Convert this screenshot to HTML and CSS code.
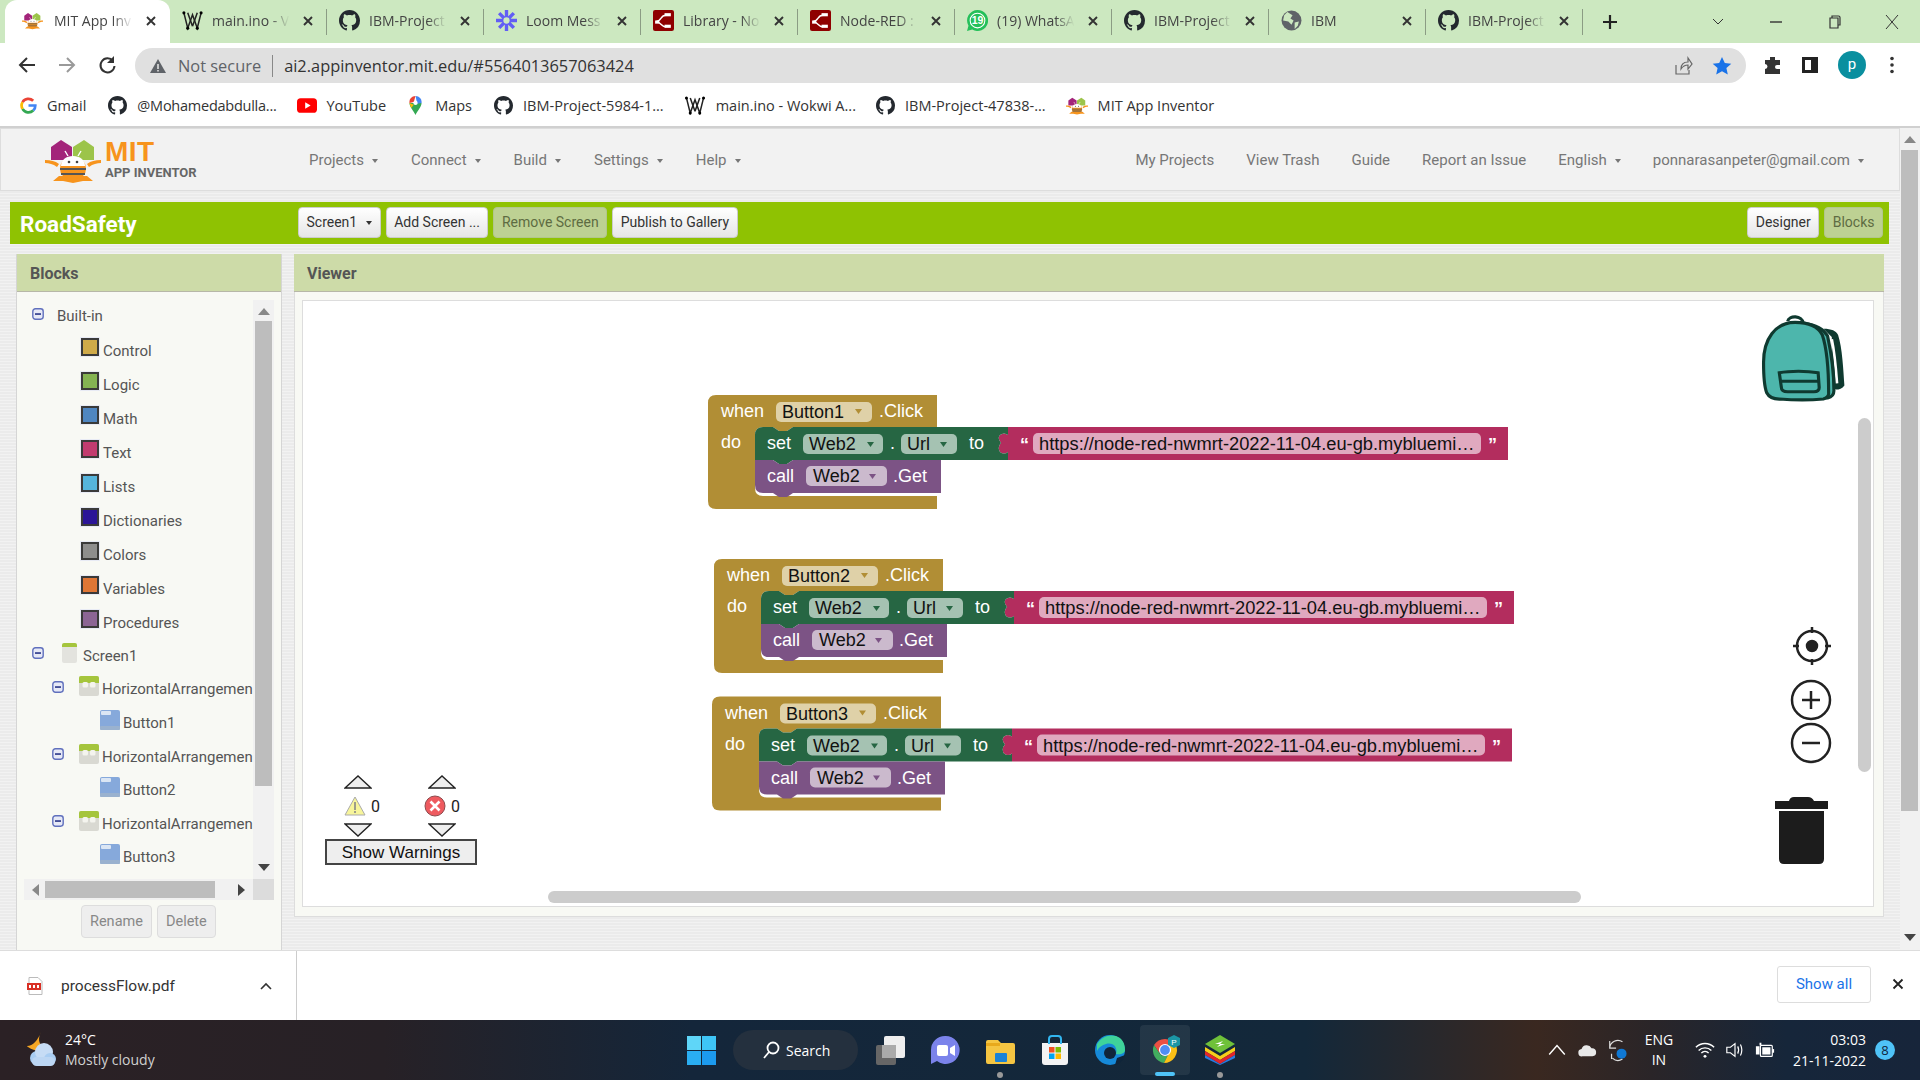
FILE: index.html
```html
<!DOCTYPE html>
<html lang="en">
<head>
    <meta charset="UTF-8">
    <title>MIT App Inventor</title>
    <link rel="stylesheet" href="styles.css">
</head>
<body>
    <!-- shared icons -->
    <svg class="defs" width="0" height="0">
        <symbol id="i-github" viewBox="0 0 16 16"><path fill="#24292f" d="M8 0C3.58 0 0 3.58 0 8c0 3.54 2.29 6.53 5.47 7.59.4.07.55-.17.55-.38 0-.19-.01-.82-.01-1.49-2.01.37-2.53-.49-2.69-.94-.09-.23-.48-.94-.82-1.13-.28-.15-.68-.52-.01-.53.63-.01 1.08.58 1.23.82.72 1.21 1.87.87 2.33.69.07-.52.28-.87.51-1.07-1.78-.2-3.64-.89-3.64-3.95 0-.87.31-1.59.82-2.15-.08-.2-.36-1.02.08-2.12 0 0 .67-.21 2.2.82.64-.18 1.32-.27 2-.27.68 0 1.36.09 2 .27 1.53-1.04 2.2-.82 2.2-.82.44 1.1.16 1.92.08 2.12.51.56.82 1.27.82 2.15 0 3.07-1.87 3.75-3.65 3.95.29.25.54.73.54 1.48 0 1.07-.01 1.93-.01 2.2 0 .21.15.46.55.38A8.013 8.013 0 0016 8c0-4.42-3.58-8-8-8z"/></symbol>
        <symbol id="i-wokwi" viewBox="0 0 22 20"><g fill="none" stroke="#222" stroke-width="1.6"><path d="M2 2l4 16 5-14 5 14 4-16"/><path d="M6 2l5 14M16 2l-5 14"/></g><circle cx="2" cy="2" r="1.6"/><circle cx="20" cy="2" r="1.6"/><circle cx="6" cy="18" r="1.6"/><circle cx="16" cy="18" r="1.6"/></symbol>
        <symbol id="i-nodered" viewBox="0 0 20 20"><rect width="20" height="20" rx="2" fill="#8f0000"/><g fill="none" stroke="#fff" stroke-width="1.4"><path d="M3 11c5 0 4-6 9-6M3 11c4 0 5 5 9 5"/></g><rect x="11" y="3" width="6" height="3" fill="#fff"/><rect x="2" y="10" width="4" height="3" fill="#fff"/><rect x="11" y="14" width="6" height="3" fill="#fff"/></symbol>
        <symbol id="i-bee" viewBox="0 0 56 46"><path fill="#a3247a" d="M6 10L16 3l11 7v13H6z"/><path fill="#9cc44a" d="M28 10l11-7 10 7v13H28z"/><path fill="#f7941d" d="M0 23c6 0 10 1 14 4l-2 3C8 27 4 26 0 26zM56 23c-6 0-10 1-14 4l2 3c4-3 8-4 12-4zM14 39l-6 5h10l10 2 10-2h10l-6-5z"/><rect x="15" y="21" width="26" height="21" rx="10" fill="#f7941d"/><path fill="#fff" d="M16 29c0-6 5-10 12-10s12 4 12 10z"/><path fill="#555" d="M15 31h26v2H15zM16 36h24v2H16z"/><circle cx="24" cy="25" r="1.3" fill="#444"/><circle cx="32" cy="25" r="1.3" fill="#444"/><path d="M23 19l-3-5M33 19l3-5" stroke="#fff" stroke-width="1.4"/></symbol>
        <symbol id="i-close" viewBox="0 0 12 12"><path d="M2 2l8 8M10 2l-8 8" stroke="#333" stroke-width="1.9"/></symbol>
        <symbol id="i-minus" viewBox="0 0 12 12"><rect x=".8" y=".8" width="10.4" height="10.4" rx="2.6" fill="#e6e9f6" stroke="#6070bd" stroke-width="1.4"/><rect x="3" y="5.2" width="6" height="1.7" fill="#34408e"/></symbol>
        <symbol id="i-arrange" viewBox="0 0 20 20"><rect width="20" height="20" rx="2" fill="#d9d9d2"/><path fill="#a5c53c" d="M0 2q0-2 2-2h16q2 0 2 2v5H0z"/><rect x="3.500" y="6" width="5.500" height="5.500" rx="1.500" fill="#f4f4ee"/><rect x="11" y="6" width="5.500" height="5.500" rx="1.500" fill="#f4f4ee"/></symbol>
        <symbol id="i-button" viewBox="0 0 20 20"><rect width="20" height="20" rx="2" fill="#86a9db"/><rect y="16" width="20" height="4" rx="1" fill="#9ab2cf"/><rect x="1" y="1" width="10" height="4" rx="1" fill="#dbe6f4"/></symbol>
        <symbol id="i-up" viewBox="0 0 28 14"><path d="M1 13L14 1l13 12z" fill="#eee" stroke="#222" stroke-width="1.4"/></symbol>
        <symbol id="i-down" viewBox="0 0 28 14"><path d="M1 1l13 12L27 1z" fill="#eee" stroke="#222" stroke-width="1.4"/></symbol>
    </svg>

    <div class="window">
        <div class="tabstrip">
            <div class="tab tab-active">
                <svg class="favicon"><use href="#i-bee"/></svg>
                <span class="tab-title">MIT App Inv</span>
                <svg class="tab-close"><use href="#i-close"/></svg>
            </div>
            <div class="tab">
                <svg class="favicon"><use href="#i-wokwi"/></svg>
                <span class="tab-title">main.ino - V</span>
                <svg class="tab-close"><use href="#i-close"/></svg>
            </div>
            <div class="tab">
                <svg class="favicon"><use href="#i-github"/></svg>
                <span class="tab-title">IBM-Project</span>
                <svg class="tab-close"><use href="#i-close"/></svg>
            </div>
            <div class="tab">
                <svg class="favicon" viewBox="0 0 20 20"><g stroke="#625df5" stroke-width="3.2"><path d="M10 0v20M0 10h20M3 3l14 14M17 3L3 17"/></g><circle cx="10" cy="10" r="3" fill="#cce8c0"/></svg>
                <span class="tab-title">Loom Mess</span>
                <svg class="tab-close"><use href="#i-close"/></svg>
            </div>
            <div class="tab">
                <svg class="favicon"><use href="#i-nodered"/></svg>
                <span class="tab-title">Library - No</span>
                <svg class="tab-close"><use href="#i-close"/></svg>
            </div>
            <div class="tab">
                <svg class="favicon"><use href="#i-nodered"/></svg>
                <span class="tab-title">Node-RED :</span>
                <svg class="tab-close"><use href="#i-close"/></svg>
            </div>
            <div class="tab">
                <svg class="favicon" viewBox="0 0 20 20"><path fill="#25c05a" d="M10 0a10 10 0 00-8.6 15L0 20l5-1.400A10 10 0 1010 0z"/><circle cx="10" cy="10" r="7" fill="#25c05a" stroke="#fff" stroke-width="1"/><text x="10" y="13.500" class="wa-count">19</text></svg>
                <span class="tab-title">(19) WhatsA</span>
                <svg class="tab-close"><use href="#i-close"/></svg>
            </div>
            <div class="tab">
                <svg class="favicon"><use href="#i-github"/></svg>
                <span class="tab-title">IBM-Project</span>
                <svg class="tab-close"><use href="#i-close"/></svg>
            </div>
            <div class="tab">
                <svg class="favicon" viewBox="0 0 20 20"><circle cx="10" cy="10" r="9.500" fill="#5f6368"/><path fill="#cce8c0" d="M6 2l5 3-2 3 3 2-2 4-3-3-5-1 1-5zM13 12l4-1-1 4-3 3z"/></svg>
                <span class="tab-title">IBM</span>
                <svg class="tab-close"><use href="#i-close"/></svg>
            </div>
            <div class="tab">
                <svg class="favicon"><use href="#i-github"/></svg>
                <span class="tab-title">IBM-Project</span>
                <svg class="tab-close"><use href="#i-close"/></svg>
            </div>
            <svg class="new-tab" viewBox="0 0 16 16"><path d="M8 1v14M1 8h14" stroke="#222" stroke-width="2.200"/></svg>
            <div class="window-btns">
                <svg class="win-btn" viewBox="0 0 16 16"><path d="M3 5l5 5 5-5" fill="none" stroke="#333"/></svg>
                <svg class="win-btn" viewBox="0 0 16 16"><path d="M2 8h12" stroke="#333" stroke-width="1.400"/></svg>
                <svg class="win-btn" viewBox="0 0 16 16"><path d="M4 4h8v10H4zM6 4V2h6.500Q14 2 14 3.500V11h-2" fill="none" stroke="#333" stroke-width="1.200"/></svg>
                <svg class="win-btn" viewBox="0 0 16 16"><path d="M2 1l12 14M14 1L2 15" stroke="#333"/></svg>
            </div>
        </div>

        <div class="toolbar">
            <svg class="nav-icon" viewBox="0 0 20 20"><path d="M18 10H3M10 3l-7 7 7 7" fill="none" stroke="#333" stroke-width="2"/></svg>
            <svg class="nav-icon" viewBox="0 0 20 20"><path d="M2 10h15M10 3l7 7-7 7" fill="none" stroke="#9a9a9a" stroke-width="2"/></svg>
            <svg class="nav-icon" viewBox="0 0 20 20"><path d="M16 6a7 7 0 101.500 5" fill="none" stroke="#333" stroke-width="2"/><path d="M17 1v7h-7z" fill="#333"/></svg>
            <div class="omnibox">
                <svg class="warn-glyph" viewBox="0 0 16 16"><path fill="#5f6368" d="M8 1l8 14H0z"/><path fill="#e0e0e0" d="M7.200 6h1.600v5H7.200zM7.200 12h1.600v1.500H7.200z"/></svg>
                <span class="not-secure">Not secure</span>
                <span class="omni-sep"></span>
                <span class="url">ai2.appinventor.mit.edu/#5564013657063424</span>
                <svg class="omni-share" viewBox="0 0 20 20"><path d="M3 9v9h13v-4M8 13c0-5 3-7 7-7V2l4 6-4 5V9c-3 0-5 1-7 4z" fill="none" stroke="#666" stroke-width="1.200"/></svg>
                <svg class="omni-star" viewBox="0 0 20 20"><path fill="#1a73e8" d="M10 1l2.800 6 6.500.7-4.900 4.300 1.400 6.500L10 15.200 4.200 18.500 5.600 12 .7 7.700 7.200 7z"/></svg>
            </div>
            <svg class="tool-icon" viewBox="0 0 20 20"><path fill="#333" d="M7 2h5v3h5v5h-3a2 2 0 000 4h3v5H2v-5a2.500 2.500 0 000-5V5h5z"/></svg>
            <svg class="tool-icon" viewBox="0 0 20 20"><path fill="#222" d="M2 2h16v16H2z"/><path fill="#fff" d="M5 5h6v10H5z"/></svg>
            <span class="avatar">p</span>
            <svg class="tool-icon tool-dots" viewBox="0 0 20 20"><circle cx="10" cy="3.500" r="1.800" fill="#333"/><circle cx="10" cy="10" r="1.800" fill="#333"/><circle cx="10" cy="16.500" r="1.800" fill="#333"/></svg>
        </div>

        <div class="bookmarks">
            <span class="bookmark bm-gmail">
                <svg class="bm-icon bm-google" viewBox="0 0 20 20"><path fill="none" stroke="#4285f4" stroke-width="3.200" d="M10 10h8a8 8 0 01-2.500 6"/><path fill="none" stroke="#34a853" stroke-width="3.200" d="M15.500 16A8 8 0 013 14"/><path fill="none" stroke="#fbbc05" stroke-width="3.200" d="M3 14a8 8 0 010-8"/><path fill="none" stroke="#ea4335" stroke-width="3.200" d="M3 6a8 8 0 0112.500-1.500"/></svg>
                Gmail
            </span>
            <span class="bookmark bm-tight"><svg class="bm-icon"><use href="#i-github"/></svg>@Mohamedabdulla...</span>
            <span class="bookmark">
                <svg class="bm-icon bm-yt" viewBox="0 0 22 16"><rect width="22" height="16" rx="4" fill="#f00"/><path fill="#fff" d="M9 4.500L15 8l-6 3.500z"/></svg>
                YouTube
            </span>
            <span class="bookmark bm-maps">
                <svg class="bm-icon" viewBox="0 0 16 22"><path fill="#34a853" d="M8 22C6 17 1 13 1 8h14c0 5-5 9-7 14z"/><path fill="#fbbc05" d="M1 8l5 2-3 4z"/><path fill="#4285f4" d="M8 0a7 7 0 017 8l-5 1z"/><path fill="#ea4335" d="M8 0a7 7 0 00-7 8l5-1z"/><circle cx="8" cy="8" r="2.500" fill="#fff"/></svg>
                Maps
            </span>
            <span class="bookmark"><svg class="bm-icon"><use href="#i-github"/></svg>IBM-Project-5984-1...</span>
            <span class="bookmark"><svg class="bm-icon bm-wide"><use href="#i-wokwi"/></svg>main.ino - Wokwi A...</span>
            <span class="bookmark"><svg class="bm-icon"><use href="#i-github"/></svg>IBM-Project-47838-...</span>
            <span class="bookmark"><svg class="bm-icon bm-wide"><use href="#i-bee"/></svg>MIT App Inventor</span>
        </div>

        <div class="page">
            <div class="app">
                <header class="app-header">
                    <div class="logo">
                        <svg class="logo-bee"><use href="#i-bee"/></svg>
                        <div class="logo-text">
                            <span class="logo-mit">MIT</span>
                            <span class="logo-sub">APP INVENTOR</span>
                        </div>
                    </div>
                    <nav class="menu">
                        <span class="menu-item caret">Projects</span>
                        <span class="menu-item caret">Connect</span>
                        <span class="menu-item caret">Build</span>
                        <span class="menu-item caret">Settings</span>
                        <span class="menu-item caret">Help</span>
                    </nav>
                    <nav class="menu menu-right">
                        <span class="menu-item">My Projects</span>
                        <span class="menu-item">View Trash</span>
                        <span class="menu-item">Guide</span>
                        <span class="menu-item">Report an Issue</span>
                        <span class="menu-item caret">English</span>
                        <span class="menu-item caret">ponnarasanpeter@gmail.com</span>
                    </nav>
                </header>

                <div class="project-bar">
                    <span class="project-name">RoadSafety</span>
                    <div class="btn-row">
                        <button class="ode-btn caret-dark">Screen1</button>
                        <button class="ode-btn">Add Screen ...</button>
                        <button class="ode-btn ode-off">Remove Screen</button>
                        <button class="ode-btn">Publish to Gallery</button>
                    </div>
                    <div class="btn-row btn-row-right">
                        <button class="ode-btn">Designer</button>
                        <button class="ode-btn ode-off">Blocks</button>
                    </div>
                </div>

                <div class="panels">
                    <section class="blocks-panel">
                        <h2 class="panel-title">Blocks</h2>
                        <div class="tree-wrap">
                            <div class="tree">
                                <div class="tree-row row-root row-first"><svg class="tree-minus"><use href="#i-minus"/></svg>Built-in</div>
                                <div class="tree-row row-cat"><i class="swatch sw-control"></i>Control</div>
                                <div class="tree-row row-cat"><i class="swatch sw-logic"></i>Logic</div>
                                <div class="tree-row row-cat"><i class="swatch sw-math"></i>Math</div>
                                <div class="tree-row row-cat"><i class="swatch sw-text"></i>Text</div>
                                <div class="tree-row row-cat"><i class="swatch sw-lists"></i>Lists</div>
                                <div class="tree-row row-cat"><i class="swatch sw-dict"></i>Dictionaries</div>
                                <div class="tree-row row-cat"><i class="swatch sw-colors"></i>Colors</div>
                                <div class="tree-row row-cat"><i class="swatch sw-vars"></i>Variables</div>
                                <div class="tree-row row-cat"><i class="swatch sw-proc"></i>Procedures</div>
                                <div class="tree-row row-root row-comp row-screen"><svg class="tree-minus"><use href="#i-minus"/></svg><i class="screen-icon"></i>Screen1</div>
                                <div class="tree-row row-arr row-comp"><svg class="tree-minus"><use href="#i-minus"/></svg><svg class="comp-icon"><use href="#i-arrange"/></svg><span class="row-clip">HorizontalArrangemen</span></div>
                                <div class="tree-row row-btn row-comp"><svg class="comp-icon"><use href="#i-button"/></svg>Button1</div>
                                <div class="tree-row row-arr row-comp"><svg class="tree-minus"><use href="#i-minus"/></svg><svg class="comp-icon"><use href="#i-arrange"/></svg><span class="row-clip">HorizontalArrangemen</span></div>
                                <div class="tree-row row-btn row-comp"><svg class="comp-icon"><use href="#i-button"/></svg>Button2</div>
                                <div class="tree-row row-arr row-comp"><svg class="tree-minus"><use href="#i-minus"/></svg><svg class="comp-icon"><use href="#i-arrange"/></svg><span class="row-clip">HorizontalArrangemen</span></div>
                                <div class="tree-row row-btn row-comp"><svg class="comp-icon"><use href="#i-button"/></svg>Button3</div>
                                <div class="tree-row row-cat row-comp"><i class="web-icon"></i></div>
                            </div>
                            <div class="vbar">
                                <span class="arrow arrow-up"></span>
                                <span class="vbar-thumb"></span>
                                <span class="arrow arrow-down"></span>
                            </div>
                            <div class="hbar">
                                <span class="arrow arrow-left"></span>
                                <span class="hbar-thumb"></span>
                                <span class="arrow arrow-right"></span>
                            </div>
                            <div class="bar-corner"></div>
                        </div>
                        <div class="tree-btns">
                            <button class="tree-btn">Rename</button>
                            <button class="tree-btn">Delete</button>
                        </div>
                    </section>

                    <section class="viewer-panel">
                        <h2 class="panel-title">Viewer</h2>
                        <div class="viewer-body">
                            <div class="workspace">
                                <svg class="canvas" width="1570" height="605">
                                    <defs>
                                        <g id="stack">
                                            <path class="b-ctl" d="M8 0H229V32H85l-6 4h-8l-6-4H55Q47 32 47 40V93Q47 101 55 101H229V114H8Q0 114 0 106V8Q0 0 8 0Z"/>
                                            <path class="b-txt" d="M300 32H800V65H300V57Q296 60 292 57Q289 52 293 48Q289 43 292 40Q296 37 300 40Z"/>
                                            <path class="b-set" d="M55 32H65l6 4h8l6-4H300V40Q296 37 292 40Q289 43 293 48Q289 52 292 57Q296 60 300 57V65H85l-6 4h-8l-6-4H47V40Q47 32 55 32Z"/>
                                            <path class="b-call" d="M47 65H65l6 4h8l6-4H233V98H85l-6 4h-8l-6-4H55Q47 98 47 90Z"/>
                                            <text class="b-label" x="13" y="22">when</text>
                                            <text class="b-label" x="171" y="22">.Click</text>
                                            <text class="b-label" x="13" y="53">do</text>
                                            <text class="b-label" x="59" y="54">set</text>
                                            <rect class="f-set" x="95" y="39" width="80" height="20" rx="5"/>
                                            <text class="b-field" x="101" y="55">Web2</text>
                                            <path class="tri-set" d="M159 47h7l-3.500 5z"/>
                                            <text class="b-label" x="182" y="54">.</text>
                                            <rect class="f-set" x="193" y="39" width="56" height="20" rx="5"/>
                                            <text class="b-field" x="199" y="55">Url</text>
                                            <path class="tri-set" d="M232 47h7l-3.500 5z"/>
                                            <text class="b-label" x="261" y="54">to</text>
                                            <text class="b-quote" x="312" y="56">“</text>
                                            <rect class="f-txt" x="325" y="38" width="448" height="21" rx="5"/>
                                            <text class="b-field b-url" x="331" y="55">https://node-red-nwmrt-2022-11-04.eu-gb.mybluemi…</text>
                                            <text class="b-quote" x="780" y="56">”</text>
                                            <text class="b-label" x="59" y="87">call</text>
                                            <rect class="f-call" x="98" y="71" width="81" height="20" rx="5"/>
                                            <text class="b-field" x="105" y="87">Web2</text>
                                            <path class="tri-call" d="M161 79h7l-3.500 5z"/>
                                            <text class="b-label" x="185" y="87">.Get</text>
                                            <rect class="f-ctl" x="68" y="7" width="96" height="20" rx="5"/>
                                            <path class="tri-ctl" d="M147 14h7l-3.500 5z"/>
                                        </g>
                                    </defs>

                                    <g transform="translate(405 94)">
                                        <use href="#stack"/>
                                        <text class="b-field" x="74" y="23">Button1</text>
                                    </g>
                                    <g transform="translate(411 258)">
                                        <use href="#stack"/>
                                        <text class="b-field" x="74" y="23">Button2</text>
                                    </g>
                                    <g transform="translate(409 395.500)">
                                        <use href="#stack"/>
                                        <text class="b-field" x="74" y="23">Button3</text>
                                    </g>

                                    <!-- backpack -->
                                    <g class="pack" transform="translate(1459.500 13) scale(1.05)">
                                        <path class="pack-strap" d="M58 14c8 0 12 2 14 6 4 12 5 34 6 48-2 3-5 4-8 4l-4-2 0-48z"/>
                                        <path class="pack-slit" d="M66 24c3 14 4 28 5 42"/>
                                        <path class="pack-side" d="M40 9c10 1 18 5 22 12 3 14 6 35 6 52 0 4-2 6-6 7H40z"/>
                                        <path class="pack-body" d="M31 8C12 8 1 24 1 46c0 12 1 24 3 29 2 4 6 6 12 6 14 1 30 1 42 0 3-1 5-2 5-5 0-22-2-44-6-56C53 12 43 8 31 8z"/>
                                        <path class="pack-line" d="M24 7c1-6 14-6 15 2M16 56c10-2 26-2 37 0l1 14c0 3-2 4-5 4H24c-4 0-6-1-6-4zM16 64h38"/>
                                    </g>
                                    <!-- workspace controls -->
                                    <g class="ctl-line" transform="translate(1509 345)">
                                        <circle r="15"/><path d="M0-19v6M0 13v6M-19 0h6M13 0h6"/><circle class="ctl-dot" r="5"/>
                                    </g>
                                    <g class="ctl-line" transform="translate(1508 399)">
                                        <circle r="19"/><path d="M-9 0H9M0-9V9"/>
                                    </g>
                                    <g class="ctl-line" transform="translate(1508 442)">
                                        <circle r="19"/><path d="M-9 0H9"/>
                                    </g>
                                    <path class="trash" d="M1472 500h53v8h-53zM1486 500q1-4 5-4h14q4 0 6 4zM1476 510h45v48q0 5-5 5h-35q-5 0-5-5z"/>
                                </svg>

                                <div class="warn-box">
                                    <div class="warn-cols">
                                        <div class="warn-col">
                                            <svg class="warn-tri"><use href="#i-up"/></svg>
                                            <div class="warn-count">
                                                <svg class="warn-icon" viewBox="0 0 22 20"><path d="M11 1l10 18H1z" fill="#f7f59b" stroke="#aaa"/><path d="M10.200 6h1.600v8h-1.600zM10.200 15h1.600v2h-1.600z" fill="#888"/></svg>
                                                0
                                            </div>
                                            <svg class="warn-tri"><use href="#i-down"/></svg>
                                        </div>
                                        <div class="warn-col warn-col-err">
                                            <svg class="warn-tri"><use href="#i-up"/></svg>
                                            <div class="warn-count">
                                                <svg class="warn-icon" viewBox="0 0 22 22"><circle cx="11" cy="11" r="10" fill="#ee5a5f" stroke="#8d4a4d"/><path d="M6.500 6.500l9 9M15.500 6.500l-9 9" stroke="#fff" stroke-width="2.600"/></svg>
                                                0
                                            </div>
                                            <svg class="warn-tri"><use href="#i-down"/></svg>
                                        </div>
                                    </div>
                                    <button class="warn-btn">Show Warnings</button>
                                </div>

                                <span class="ws-vscroll"></span>
                                <span class="ws-hscroll"></span>
                            </div>
                        </div>
                    </section>
                </div>
            </div>
            <div class="page-scroll">
                <span class="arrow arrow-up"></span>
                <span class="page-thumb"></span>
                <span class="arrow arrow-down"></span>
            </div>
        </div>

        <div class="download-bar">
            <div class="download-item">
                <svg class="pdf-icon" viewBox="0 0 16 18"><path fill="#fff" stroke="#bbb" d="M2 .5h9l4 4v13H2z"/><rect y="6" width="14" height="7" fill="#d93025"/><path fill="#fff" d="M2 8h2v3H2zM6 8h2v3H6zM10 8h2v3h-2z"/></svg>
                <span class="download-name">processFlow.pdf</span>
                <svg class="download-chev" viewBox="0 0 12 8"><path d="M1 7l5-5 5 5" fill="none" stroke="#333" stroke-width="1.600"/></svg>
            </div>
            <button class="show-all">Show all</button>
            <svg class="download-close" viewBox="0 0 12 12"><path d="M1.500 1.500l9 9M10.500 1.500l-9 9" stroke="#222" stroke-width="1.800"/></svg>
        </div>

        <footer class="taskbar">
            <div class="weather">
                <svg class="weather-icon" viewBox="0 0 32 36"><path fill="#f5a623" d="M16 0c-3 6-3 12 3 15l-4 5C8 18 2 15 2 14c6 0 11-6 14-14z"/><circle cx="12" cy="26" r="7" fill="#a9cdf2"/><circle cx="19" cy="20" r="9" fill="#c6dcf5"/><circle cx="25" cy="27" r="6" fill="#a9cdf2"/><rect x="7" y="25" width="23" height="9" rx="4.500" fill="#bcd6f3"/></svg>
                <div class="weather-text">
                    <span class="temp">24°C</span>
                    <span class="sky">Mostly cloudy</span>
                </div>
            </div>
            <div class="task-center">
                <svg class="win-logo" viewBox="0 0 29 29"><rect width="14" height="14" fill="#5fd6f8"/><rect x="15" width="14" height="14" fill="#3ec5f6"/><rect y="15" width="14" height="14" fill="#2aaef2"/><rect x="15" y="15" width="14" height="14" fill="#1c9aee"/></svg>
                <div class="search-pill">
                    <svg class="search-icon" viewBox="0 0 18 18"><circle cx="11" cy="7" r="5.500" fill="none" stroke="#fff" stroke-width="1.800"/><path d="M7 11l-5 6" stroke="#fff" stroke-width="1.800"/></svg>
                    Search
                </div>
                <svg class="task-icon" viewBox="0 0 30 30"><rect x="1" y="10" width="20" height="20" rx="2" fill="#666"/><rect x="9" y="1" width="21" height="22" rx="2" fill="#eee"/><rect x="7" y="10" width="14" height="13" fill="#aaa"/></svg>
                <svg class="task-icon" viewBox="0 0 30 30"><path fill="#7b83eb" d="M15 1a14 14 0 00-14 14v14l6-3a14 14 0 108-25z"/><rect x="7" y="10" width="11" height="11" rx="2" fill="#fff"/><path fill="#fff" d="M20 13l5-3v11l-5-3z"/></svg>
                <span class="task-slot">
                    <svg class="task-icon" viewBox="0 0 30 30"><path fill="#f5c542" d="M1 7q0-2 2-2h10l3 3h12q2 0 2 2v17q0 2-2 2H3q-2 0-2-2z"/><rect x="10" y="18" width="12" height="9" rx="1" fill="#1b82d6"/><rect x="1" y="8" width="14" height="3" fill="#e8a91c"/></svg>
                    <i class="task-dot"></i>
                </span>
                <svg class="task-icon" viewBox="0 0 30 30"><path fill="#f3f3f3" d="M2 8h26v19q0 3-3 3H5q-3 0-3-3z"/><path fill="none" stroke="#32b6f0" stroke-width="2" d="M9 9V4q0-3 3-3h6q3 0 3 3v5"/><rect x="9" y="12" width="5.500" height="5.500" fill="#f25022"/><rect x="15.500" y="12" width="5.500" height="5.500" fill="#7fba00"/><rect x="9" y="18.500" width="5.500" height="5.500" fill="#00a4ef"/><rect x="15.500" y="18.500" width="5.500" height="5.500" fill="#ffb900"/></svg>
                <svg class="task-icon" viewBox="0 0 30 30"><circle cx="15" cy="15" r="15" fill="#1689d8"/><path fill="#3fd39a" d="M2 9C6 2 14-1 21 1c6 2 9 7 9 14 0 3-4 5-9 4 2-7-3-12-10-10C7 10 4 12 2 16z"/><circle cx="15" cy="18" r="6" fill="#10253a"/><path fill="#10253a" d="M20 30a15 15 0 0010-10l-8 3z"/></svg>
                <span class="task-slot task-active">
                    <svg class="task-icon" viewBox="0 0 30 30"><path fill="#ea4335" d="M15 4a13 13 0 00-11 6l6 9a6 6 0 015-9h11A13 13 0 0015 4z"/><path fill="#34a853" d="M4 10a13 13 0 0010 18l4-8a6 6 0 01-8-1z"/><path fill="#fbbc05" d="M14 28a13 13 0 0012-18H15a6 6 0 013 10z"/><circle cx="15" cy="15" r="5.500" fill="#4285f4" stroke="#fff" stroke-width="1.200"/><path fill="#0a8f9f" d="M18 3l6-3 6 3v7l-6 3-6-3z"/><text x="24" y="9.500" class="chrome-badge">P</text></svg>
                    <i class="task-bar"></i>
                </span>
                <span class="task-slot">
                    <svg class="task-icon" viewBox="0 0 30 30"><path fill="#6fc13a" d="M15 0l15 9-15 9L0 9z"/><path fill="#f4cf1a" d="M0 12l15 9 15-9v4l-15 9-15-9z"/><path fill="#e0262b" d="M0 16l15 9 15-9v4l-15 9-15-9z"/><path fill="#2a7be0" d="M0 20l15 9 15-9v3l-15 7-15-7z"/><path d="M10 9l8-3-3 3 5 0-8 3 3-3z" fill="#fff"/></svg>
                    <i class="task-dot"></i>
                </span>
            </div>
            <div class="tray">
                <svg class="tray-icon" viewBox="0 0 18 18"><path d="M2 13l7-8 7 8" fill="none" stroke="#fff" stroke-width="1.300"/></svg>
                <svg class="tray-icon" viewBox="0 0 22 18"><path fill="#e8e8e8" d="M6 16a4 4 0 01-1-8 6 6 0 0111-1 4.500 4.500 0 011 9z"/></svg>
                <svg class="tray-icon tray-sync" viewBox="0 0 22 28"><path d="M3 12a9 9 0 0114-7M3 4v8h7M17 24a9 9 0 01-11-1M5 18v6" fill="none" stroke="#ddd" stroke-width="1.300"/><circle cx="16" cy="18" r="5.500" fill="#0f78d4"/></svg>
                <div class="lang"><span>ENG</span><span>IN</span></div>
                <svg class="tray-icon" viewBox="0 0 22 18"><path d="M1 6a14 14 0 0120 0M4 9.500a10 10 0 0114 0M7 12.500a5 5 0 018 0" fill="none" stroke="#fff" stroke-width="1.600"/><circle cx="11" cy="16" r="1.600" fill="#fff"/></svg>
                <svg class="tray-icon" viewBox="0 0 22 18"><path fill="none" stroke="#fff" stroke-width="1.300" d="M2 6h4l5-4v14l-5-4H2zM14 5q2 4 0 8M17 3q3 6 0 12"/></svg>
                <svg class="tray-icon" viewBox="0 0 22 18"><path fill="#fff" d="M5 1h2v3H5zM1 5h4v9H1z"/><rect x="6" y="4" width="13" height="12" rx="1" fill="none" stroke="#fff" stroke-width="1.300"/><rect x="8" y="6" width="9" height="8" fill="#fff"/><rect x="19" y="8" width="2" height="4" fill="#fff"/></svg>
                <div class="clock"><span>03:03</span><span>21-11-2022</span></div>
                <span class="notify">8</span>
            </div>
        </footer>
    </div>
</body>
</html>
```

FILE: styles.css
```css
* {
    box-sizing: border-box;
}

html, body {
    margin: 0;
    height: 100%;
    overflow: hidden;
}

body {
    font-family: 'Roboto', 'Liberation Sans', sans-serif;
    color: #333;
}

.defs {
    display: block;
}

.window {
    display: flex;
    flex-direction: column;
    height: 1080px;
    background: #fff;
}

/* browser tabs */
.tabstrip {
    display: flex;
    align-items: center;
    height: 43px;
    padding-left: 5px;
    background: #cce8c0;
    font-family: 'Open Sans', sans-serif;
    font-size: 14px;
}

.tab {
    position: relative;
    display: flex;
    align-items: center;
    width: 157px;
    height: 43px;
    padding: 0 13px 2px 12px;
    color: #444;
}

.tab::after {
    content: "";
    position: absolute;
    right: 0;
    top: 9px;
    height: 26px;
    width: 1px;
    background: #8b9c84;
}

.tab-active {
    width: 165px;
    background: #fff;
    border-radius: 12px 12px 0 0;
    padding-left: 17px;
}

.tab-active::after {
    display: none;
}

.favicon {
    flex: none;
    width: 21px;
    height: 21px;
    margin-right: 9px;
}

.tab-active .favicon {
    margin-right: 11px;
}

.tab-title {
    flex: 1;
    min-width: 0;
    white-space: nowrap;
    -webkit-mask-image: linear-gradient(90deg, #000 68%, transparent 90%);
    mask-image: linear-gradient(90deg, #000 68%, transparent 90%);
}

.tab-close {
    flex: none;
    width: 12px;
    height: 12px;
    margin-left: 4px;
}

.wa-count {
    font-family: 'Liberation Sans', sans-serif;
    font-size: 10px;
    font-weight: bold;
    fill: #fff;
    text-anchor: middle;
}

.new-tab {
    width: 16px;
    height: 16px;
    margin-left: 19px;
}

.window-btns {
    display: flex;
    margin-left: auto;
    margin-right: 20px;
    gap: 42px;
}

.win-btn {
    width: 16px;
    height: 16px;
}

/* address bar */
.toolbar {
    display: flex;
    align-items: center;
    height: 44px;
    padding-left: 17px;
    background: #fff;
}

.nav-icon {
    width: 20px;
    height: 20px;
    margin-right: 20px;
}

.omnibox {
    display: flex;
    align-items: center;
    width: 1611px;
    height: 35px;
    margin-left: -2px;
    margin-top: 1px;
    padding-left: 15px;
    border-radius: 18px;
    background: #e0e0e0;
    font-family: 'Open Sans', sans-serif;
    font-size: 16.400px;
}

.warn-glyph {
    width: 16px;
    height: 16px;
    margin-right: 12px;
}

.not-secure {
    color: #5f6368;
}

.omni-sep {
    width: 1px;
    height: 22px;
    margin: 0 11px;
    background: #888;
}

.url {
    color: #333;
}

.omni-share {
    width: 20px;
    height: 20px;
    margin-left: auto;
    margin-right: 2px;
}

.omni-star {
    width: 20px;
    height: 20px;
    margin: 0 14px 0 17px;
}

.tool-icon {
    width: 20px;
    height: 20px;
    margin-left: 17px;
}

.avatar {
    width: 28px;
    height: 28px;
    margin: 0 0 0 18px;
    border-radius: 50%;
    background: #0a8f9f;
    color: #fff;
    font-size: 15px;
    line-height: 26px;
    text-align: center;
}

.toolbar > .tool-dots {
    margin-left: 16px;
}

/* bookmarks */
.bookmarks {
    display: flex;
    align-items: center;
    gap: 20px;
    height: 41px;
    padding: 0 0 2px 20px;
    border-bottom: 2px solid #d0d0d0;
    font-family: 'Open Sans', sans-serif;
    font-size: 14.500px;
    color: #333;
}

.bookmark {
    display: flex;
    align-items: center;
    gap: 10px;
    white-space: nowrap;
}

.bm-gmail,
.bm-maps {
    margin-right: 2px;
}

.bm-tight {
    letter-spacing: -0.25px;
}

.bm-icon {
    width: 19px;
    height: 19px;
}

.bm-google {
    width: 17px;
    height: 17px;
}

.bm-yt {
    width: 20px;
}

.bm-wide {
    width: 22px;
}

/* page */
.page {
    display: flex;
    height: 822px;
    overflow: hidden;
}

.app {
    flex: 1;
    min-width: 0;
    background-color: #ebebeb;
    background-image: repeating-linear-gradient(0deg, rgba(255, 255, 255, 0.35) 0 1px, transparent 1px 3px);
}

.page-scroll {
    position: relative;
    width: 20px;
    background: #f1f1f1;
}

.page-thumb {
    position: absolute;
    left: 1px;
    right: 2px;
    top: 22px;
    height: 661px;
    background: #bdbdbd;
}

.arrow {
    position: absolute;
    width: 0;
    height: 0;
    border: 6px solid transparent;
}

.arrow-up {
    border-top: 0;
    border-bottom: 7px solid #888;
}

.arrow-down {
    border-bottom: 0;
    border-top: 7px solid #444;
}

.arrow-left {
    border-left: 0;
    border-right: 7px solid #888;
}

.arrow-right {
    border-right: 0;
    border-left: 7px solid #444;
}

.page-scroll .arrow-up {
    left: 4px;
    top: 8px;
}

.page-scroll .arrow-down {
    left: 4px;
    bottom: 9px;
}

.app-header {
    display: flex;
    align-items: center;
    height: 63px;
    background: #f2f2f2;
    border: 1px solid #ddd;
    font-size: 15px;
    color: #777;
}

.logo {
    display: flex;
    align-items: center;
    width: 308px;
    padding-left: 44px;
}

.logo-bee {
    width: 56px;
    height: 46px;
}

.logo-text {
    display: flex;
    flex-direction: column;
    margin-left: 4px;
    padding-bottom: 2px;
}

.logo-mit {
    font-family: 'Liberation Sans', sans-serif;
    font-size: 28px;
    font-weight: bold;
    line-height: 28px;
    letter-spacing: 0.5px;
    color: #f7941d;
}

.logo-sub {
    font-size: 13px;
    font-weight: bold;
    line-height: 14px;
    color: #666;
}

.menu {
    display: flex;
    gap: 33px;
    white-space: nowrap;
}

.menu-right {
    gap: 32px;
    margin-left: auto;
    padding-right: 35px;
}

.caret::after {
    content: "";
    display: inline-block;
    margin-left: 8px;
    vertical-align: middle;
    border: 3px solid transparent;
    border-bottom: 0;
    border-top: 4px solid #777;
}

.project-bar {
    display: flex;
    align-items: center;
    width: 1879px;
    height: 42px;
    margin: 11px 0 0 10px;
    padding-left: 10px;
    background: #8fc202;
}

.project-name {
    width: 278px;
    padding-top: 2px;
    font-size: 22.500px;
    font-weight: 700;
    color: #fff;
}

.btn-row {
    display: flex;
    gap: 5px;
    margin-top: -2px;
}

.btn-row-right {
    margin-left: auto;
    padding-right: 6px;
}

.ode-btn {
    height: 31px;
    padding: 0 7.500px;
    border: 1px solid #ccc;
    border-radius: 4px;
    background: linear-gradient(#fff, #e6e6e6);
    font: 14px 'Roboto', sans-serif;
    color: #333;
}

.ode-off {
    background: #bdd193;
    border-color: #b2c68c;
    color: #5e6c42;
}

.caret-dark::after {
    content: "";
    display: inline-block;
    margin-left: 9px;
    vertical-align: middle;
    border: 3px solid transparent;
    border-bottom: 0;
    border-top: 4px solid #333;
}

.panels {
    display: flex;
    align-items: flex-start;
    gap: 12px;
    margin: 10px 0 0 16px;
}

.panel-title {
    height: 38px;
    margin: 0;
    padding-left: 13px;
    background: #cddba8;
    border-bottom: 1px solid #b7b7a8;
    font-size: 16px;
    font-weight: 700;
    line-height: 39px;
    color: #555;
}

.blocks-panel {
    width: 266px;
    height: 696px;
    background: #f8f9f4;
    border-left: 1px solid #d5d5d5;
    border-right: 1px solid #d5d5d5;
}

.tree-wrap {
    display: grid;
    grid-template-columns: 229px 21px;
    grid-template-rows: 579px 21px;
    margin: 8px 0 0 7px;
}

.tree {
    overflow: hidden;
    font-size: 15px;
    color: #555;
    white-space: nowrap;
}

.tree-row {
    display: flex;
    align-items: center;
    height: 34px;
}

.row-first {
    height: 32px;
    margin-bottom: 2px;
}

.row-comp {
    height: 33.600px;
}

.row-screen {
    margin-top: -1px;
}

.row-root {
    padding-left: 8px;
}

.row-cat {
    padding-left: 57px;
}

.row-arr {
    padding-left: 28px;
}

.row-btn {
    padding-left: 76px;
}

.row-clip {
    overflow: hidden;
}

.tree-minus {
    flex: none;
    width: 12px;
    height: 12px;
    margin: -5px 13px 0 0;
}

.swatch {
    flex: none;
    width: 18px;
    height: 18px;
    margin: -8px 4px 0 0;
    border: 2px solid #3a3a3a;
    outline: 1px solid #e8ebf5;
}

.sw-control { background: #cfaa49; }
.sw-logic { background: #84b353; }
.sw-math { background: #4f86c1; }
.sw-text { background: #c13b70; }
.sw-lists { background: #55b4dc; }
.sw-dict { background: #2b1597; }
.sw-colors { background: #8e8e8e; }
.sw-vars { background: #df7636; }
.sw-proc { background: #8c6595; }

.screen-icon {
    flex: none;
    width: 15px;
    height: 20px;
    margin: -5px 6px 0 5px;
    border-radius: 2px;
    border-top: 4px solid #a5c53c;
    background: #e3e3de;
}

.row-arr .tree-minus {
    margin-right: 15px;
}

.comp-icon {
    flex: none;
    width: 20px;
    height: 20px;
    margin: -6px 3px 0 0;
}

.web-icon {
    flex: none;
    width: 18px;
    height: 18px;
    margin: -5px 4px 0 0;
    border-radius: 50%;
    background: #1478d4;
}

.vbar {
    position: relative;
    background: #f1f1f1;
}

.vbar-thumb {
    position: absolute;
    left: 2px;
    right: 2px;
    top: 21px;
    height: 465px;
    background: #bdbdbd;
}

.vbar .arrow-up {
    left: 5px;
    top: 8px;
}

.vbar .arrow-down {
    left: 5px;
    bottom: 8px;
}

.hbar {
    position: relative;
    background: #f1f1f1;
}

.hbar-thumb {
    position: absolute;
    left: 21px;
    width: 170px;
    top: 2px;
    bottom: 2px;
    background: #bdbdbd;
}

.hbar .arrow-left {
    left: 8px;
    top: 5px;
}

.hbar .arrow-right {
    right: 8px;
    top: 5px;
}

.bar-corner {
    background: #dcdcdc;
}

.tree-btns {
    display: flex;
    gap: 5px;
    margin: 5px 0 0 64px;
}

.tree-btn {
    height: 33px;
    padding: 0 8px;
    border: 1px solid #ddd;
    border-radius: 4px;
    background: #eee;
    font: 14.500px 'Roboto', sans-serif;
    color: #888;
}

.viewer-panel {
    width: 1590px;
}

.viewer-body {
    padding: 8px 9px 9px 7px;
    background: #f8f9f4;
    border: 1px solid #ddd;
    border-top: 0;
}

.workspace {
    position: relative;
    height: 607px;
    background: #fff;
    border: 1px solid #ddd;
}

.canvas {
    display: block;
}

/* blocks */
.b-ctl { fill: #b18e35; }
.b-set { fill: #266643; }
.b-txt { fill: #b32d5e; }
.b-call { fill: #7c5385; }
.f-ctl { fill: #dfd1a8; }
.f-set { fill: #a5c2b2; }
.f-txt { fill: #e0a9bf; }
.f-call { fill: #cbbacd; }
.tri-ctl { fill: #b18e35; }
.tri-set { fill: #266643; }
.tri-call { fill: #7c5385; }

.b-label, .b-field, .b-quote {
    font-family: 'Liberation Sans', sans-serif;
    font-size: 18px;
}

.b-label { fill: #fff; }
.b-field { fill: #111; }

.b-url {
    font-size: 18.300px;
}

.b-quote {
    fill: #fff;
    font-weight: bold;
}

.pack-strap { fill: #0f3a30; }
.pack-slit { fill: none; stroke: #fff; stroke-width: 2.500; }
.pack-side { fill: #4db6ac; stroke: #0f3a30; stroke-width: 3; }
.pack-body { fill: #4db6ac; stroke: #0f3a30; stroke-width: 3; }
.pack-line { fill: none; stroke: #0f3a30; stroke-width: 3; }

.ctl-line {
    fill: none;
    stroke: #222;
    stroke-width: 2.500;
}

.ctl-dot {
    fill: #222;
}

.trash {
    fill: #1c1c1c;
}

.warn-box {
    position: absolute;
    left: 22px;
    top: 474px;
    width: 152px;
}

.warn-cols {
    display: flex;
    height: 64px;
}

.warn-col {
    width: 83px;
    padding-left: 19px;
}

.warn-col-err {
    width: 69px;
    padding-left: 16px;
}

.warn-tri {
    display: block;
    width: 28px;
    height: 14px;
}

.warn-col-err .warn-tri {
    margin-left: 4px;
}

.warn-count {
    display: flex;
    align-items: center;
    gap: 5px;
    height: 34px;
    font-size: 16px;
    color: #222;
}

.warn-icon {
    width: 22px;
    height: 22px;
}

.warn-btn {
    display: block;
    width: 152px;
    height: 26px;
    padding: 1px 0 0;
    border: 2px solid #444;
    background: #eee;
    font: 17px 'Liberation Sans', sans-serif;
    color: #111;
}

.ws-vscroll {
    position: absolute;
    left: 1555px;
    top: 117px;
    width: 13px;
    height: 354px;
    border-radius: 7px;
    background: #ccc;
}

.ws-hscroll {
    position: absolute;
    left: 245px;
    top: 590px;
    width: 1033px;
    height: 12px;
    border-radius: 6px;
    background: #ccc;
}

/* download shelf */
.download-bar {
    display: flex;
    align-items: center;
    height: 70px;
    background: #fff;
    border-top: 1px solid #ddd;
}

.download-item {
    display: flex;
    align-items: center;
    width: 297px;
    height: 69px;
    padding-left: 27px;
    border-right: 1px solid #ccc;
    font-size: 15.500px;
}

.pdf-icon {
    width: 16px;
    height: 18px;
}

.download-name {
    margin-left: 18px;
    color: #333;
}

.download-chev {
    width: 12px;
    height: 8px;
    margin-left: 85px;
}

.show-all {
    width: 94px;
    height: 37px;
    margin-left: auto;
    margin-top: -3px;
    border: 1px solid #ddd;
    border-radius: 3px;
    background: #fff;
    font: 15px 'Roboto', sans-serif;
    color: #1a73e8;
}

.download-close {
    width: 12px;
    height: 12px;
    margin: -3px 16px 0 21px;
}

/* taskbar */
.taskbar {
    display: flex;
    align-items: center;
    height: 60px;
    background: linear-gradient(90deg, #2b2125 0, #272126 20%, #14263a 36%, #13283a 68%, #3a2820 80%, #2a2528 86%, #16263a 93%, #17253a 100%);
    color: #fff;
}

.weather {
    display: flex;
    align-items: center;
    width: 687px;
    padding-left: 25px;
    font-family: 'Open Sans', sans-serif;
    font-size: 14px;
}

.weather-icon {
    width: 32px;
    height: 36px;
}

.weather-text {
    display: flex;
    flex-direction: column;
    margin-left: 8px;
    line-height: 20px;
}

.sky {
    color: #d0d0d0;
}

.task-center {
    display: flex;
    align-items: center;
}

.win-logo {
    width: 29px;
    height: 29px;
}

.search-pill {
    display: flex;
    align-items: center;
    gap: 6px;
    width: 125px;
    height: 40px;
    margin: 0 17px;
    padding-left: 29px;
    border-radius: 20px;
    background: #24303e;
    font-family: 'Open Sans', sans-serif;
    font-size: 14px;
}

.search-icon {
    width: 18px;
    height: 18px;
}

.task-icon {
    width: 30px;
    height: 30px;
    margin-right: 25px;
}

.task-slot {
    position: relative;
    display: block;
    height: 30px;
}

.task-slot .task-icon {
    display: block;
}

.task-dot {
    position: absolute;
    left: 12px;
    top: 37px;
    width: 6px;
    height: 6px;
    border-radius: 3px;
    background: #999;
}

.task-active::before {
    content: "";
    position: absolute;
    left: -10px;
    top: -10px;
    width: 50px;
    height: 50px;
    border-radius: 4px;
    background: rgba(255, 255, 255, 0.07);
}

.task-bar {
    position: absolute;
    left: 5px;
    top: 37px;
    width: 20px;
    height: 4px;
    border-radius: 2px;
    background: #4fc3f7;
}

.chrome-badge {
    font-family: 'Liberation Sans', sans-serif;
    font-size: 8px;
    fill: #fff;
    text-anchor: middle;
}

.tray {
    display: flex;
    align-items: center;
    margin-left: auto;
    padding-right: 25px;
    font-family: 'Open Sans', sans-serif;
    font-size: 14px;
}

.tray-icon {
    width: 20px;
    height: 20px;
    margin-right: 10px;
}

.tray-sync {
    height: 26px;
}

.lang {
    display: flex;
    flex-direction: column;
    align-items: center;
    width: 32px;
    margin: 0 20px 0 6px;
    line-height: 20px;
}

.clock {
    display: flex;
    flex-direction: column;
    align-items: flex-end;
    margin-left: 8px;
    line-height: 21px;
}

.notify {
    width: 20px;
    height: 20px;
    margin-left: 9px;
    border-radius: 50%;
    background: #4fc3f7;
    color: #10253a;
    font-size: 13px;
    line-height: 20px;
    text-align: center;
}
```
